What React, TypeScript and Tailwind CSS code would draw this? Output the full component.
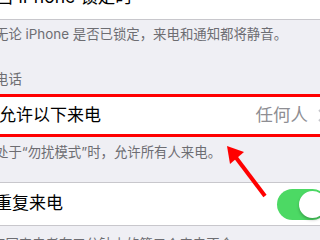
import React from "react";

export default function App() {
  return (
    <div
      className="relative w-[320px] h-[240px] overflow-hidden bg-[#efeff4]"
      style={{ fontFamily: 'Inter, "Noto Sans CJK SC", sans-serif' }}
    >
      <div className="flex flex-col">
        <div className="mt-[-24px] h-[44px] bg-white border-b border-[#c8c7cc] flex items-center">
          <span className="ml-[-4px] text-[17.5px] text-black whitespace-nowrap">当 iPhone 锁定时</span>
        </div>
        <div className="pt-[5px] h-[23px] leading-[18px] text-[13.4px] text-[#6d6d72] whitespace-nowrap">
          <span className="ml-[-5px]">无论 iPhone 是否已锁定，来电和通知都将静音。</span>
        </div>
        <div className="mt-[27px] h-[18px] leading-[18px] text-[13.4px] text-[#6d6d72] whitespace-nowrap">
          <span className="ml-[-5px]">电话</span>
        </div>
        <div className="mt-[6px] h-[43px] bg-white border-y border-[#c8c7cc] flex items-center">
          <span className="ml-[-1px] text-[17px] text-black whitespace-nowrap">允许以下来电</span>
          <span className="ml-auto text-[17.5px] text-[#8e8e93] whitespace-nowrap">任何人</span>
          <svg className="ml-[10px] mr-[-6px] shrink-0" width="8" height="13" viewBox="0 0 8 13">
            <path d="M1 1 L6.5 6.5 L1 12" fill="none" stroke="#c7c7cc" strokeWidth="2" />
          </svg>
        </div>
        <div className="pt-[6px] h-[24px] leading-[18px] text-[13.4px] text-[#6d6d72] whitespace-nowrap">
          <span className="ml-[-5px]">处于“勿扰模式”时，允许所有人来电。</span>
        </div>
        <div className="mt-[21px] h-[44px] bg-white border-y border-[#c8c7cc] flex items-center">
          <span className="ml-[-5px] text-[17px] text-black whitespace-nowrap">重复来电</span>
          <div className="ml-auto mr-[-8px] w-[51px] h-[31px] rounded-full bg-[#4cd964] relative shrink-0">
            <div className="absolute right-[2px] top-[2px] w-[27px] h-[27px] rounded-full bg-white shadow-[0_2px_3px_rgba(0,0,0,0.25)]" />
          </div>
        </div>
        <div className="pt-[9px] h-[27px] leading-[18px] text-[13.4px] text-[#6d6d72] whitespace-nowrap">
          <span className="ml-[-8px]">如同来电者在三分钟内的第二个来电不会</span>
        </div>
      </div>

      <div className="absolute top-[94px] left-[-6px] right-[-6px] h-[43px] border-[3px] border-[#ff0000]" />

      <svg className="absolute left-0 top-0" width="320" height="240" viewBox="0 0 320 240">
        <line x1="265" y1="196" x2="234" y2="155" stroke="#ff0000" strokeWidth="4" />
        <polygon points="227,146 230,164 244,152" fill="#ff0000" />
      </svg>
    </div>
  );
}
